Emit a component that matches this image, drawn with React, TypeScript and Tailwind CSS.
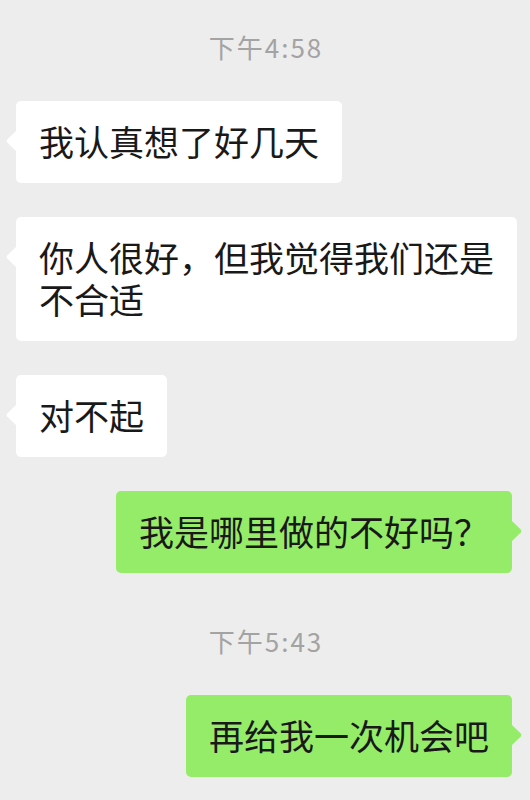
import type { ReactNode } from "react";

type Side = "left" | "right";

function Tail({ side }: { side: Side }) {
  if (side === "left") {
    return (
      <svg className="absolute left-[-10px] top-[30px]" width="10" height="20" viewBox="0 0 10 20">
        <path d="M10 0 L1.2 8.6 Q0 10 1.2 11.4 L10 20 Z" fill="#ffffff" />
      </svg>
    );
  }
  return (
    <svg className="absolute right-[-10px] top-[30px]" width="10" height="20" viewBox="0 0 10 20">
      <path d="M0 0 L8.8 8.6 Q10 10 8.8 11.4 L0 20 Z" fill="#95ec69" />
    </svg>
  );
}

function Bubble({ side, children }: { side: Side; children: ReactNode }) {
  const color = side === "left" ? "bg-white" : "bg-[#95ec69]";
  return (
    <div
      className={`relative max-w-[502px] rounded-[5px] px-[23px] pt-[19px] pb-[21px] text-[35px] leading-[42px] text-[#191919] ${color}`}
    >
      <Tail side={side} />
      {children}
    </div>
  );
}

function Time({ children, className }: { children: ReactNode; className: string }) {
  return (
    <div
      className={`flex justify-center pl-[2px] text-[26px] leading-[30px] tracking-[2px] text-[#a3a3a3] ${className}`}
    >
      {children}
    </div>
  );
}

export default function App() {
  return (
    <div className="min-h-screen bg-[#ededed] pt-[32px] font-['Noto_Sans_CJK_SC',sans-serif]">
      <Time className="">下午4:58</Time>

      <div className="mt-[39px] flex pl-[16px]">
        <Bubble side="left">我认真想了好几天</Bubble>
      </div>
      <div className="mt-[34px] flex pl-[16px]">
        <Bubble side="left">
          你人很好，但我觉得我们还是
          <br />
          不合适
        </Bubble>
      </div>
      <div className="mt-[34px] flex pl-[16px]">
        <Bubble side="left">对不起</Bubble>
      </div>
      <div className="mt-[34px] flex justify-end pr-[18px]">
        <Bubble side="right">我是哪里做的不好吗？</Bubble>
      </div>

      <Time className="mt-[53px]">下午5:43</Time>

      <div className="mt-[39px] flex justify-end pr-[18px]">
        <Bubble side="right">再给我一次机会吧</Bubble>
      </div>
    </div>
  );
}
